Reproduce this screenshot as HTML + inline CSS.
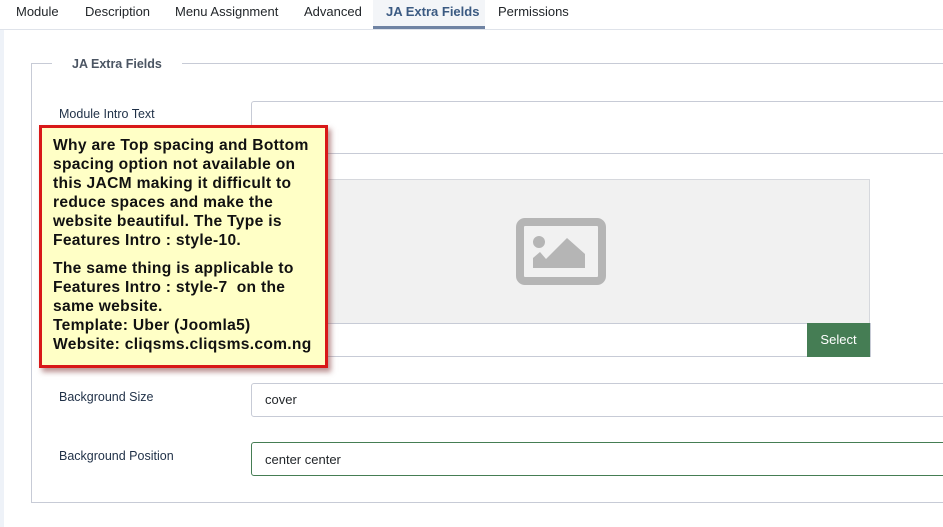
<!DOCTYPE html>
<html><head><style>
body{margin:0;width:943px;height:527px;overflow:hidden;background:#fff;font-family:"Liberation Sans",Arial,sans-serif;position:relative}
.a{position:absolute}
.tab{position:absolute;top:4px;font-size:13px;color:#22262a}
.lbl{position:absolute;font-size:12.5px;color:#1f3047}
.inp{position:absolute;border:1px solid #c7cbd6;border-radius:3px;background:#fff;box-sizing:border-box;font-size:13px;color:#22262a;padding-left:13px}
</style></head><body>
<div class="a" style="left:0;top:29px;width:4px;height:498px;background:#eef2f8"></div>
<div class="a" style="left:0;top:29px;width:943px;height:1px;background:#dfe3ea"></div>
<div class="tab" style="left:16px">Module</div>
<div class="tab" style="left:85px">Description</div>
<div class="tab" style="left:175px">Menu Assignment</div>
<div class="tab" style="left:304px">Advanced</div>
<div class="a" style="left:373px;top:0;width:112px;height:29px;background:#f3f5f8"></div>
<div class="tab" style="left:386px;color:#3b5a82;font-weight:bold">JA Extra Fields</div>
<div class="a" style="left:373px;top:26px;width:112px;height:3px;background:#6f83a3"></div>
<div class="tab" style="left:498px">Permissions</div>

<div class="a" style="left:31px;top:63px;width:930px;height:440px;border:1px solid #c7cbd6;box-sizing:border-box"></div>
<div class="a" style="left:52px;top:56px;padding:0 20px;background:#fff;font-size:12.5px;font-weight:bold;color:#4b5563;line-height:16px">JA Extra Fields</div>

<div class="lbl" style="left:59px;top:107px">Module Intro Text</div>
<div class="inp" style="left:251px;top:101px;width:720px;height:53px"></div>

<div class="a" style="left:251px;top:179px;width:619px;height:145px;background:#f1f1f1;border:1px solid #d6d8dd;box-sizing:border-box"></div>
<svg class="a" style="left:516px;top:218px" width="90" height="68" viewBox="0 0 90 68">
<rect x="4" y="4" width="82" height="59" rx="5" fill="none" stroke="#b5b5b5" stroke-width="8"/>
<circle cx="23" cy="24" r="6" fill="#b5b5b5"/>
<path d="M17 50 L17 40 L24 34 L30 41 L51 20 L69 36 L69 50 Z" fill="#b5b5b5"/>
</svg>
<div class="inp" style="left:251px;top:323px;width:620px;height:34px;border-radius:0"></div>
<div class="a" style="left:807px;top:323px;width:63px;height:34px;background:#457d54;color:#fff;font-size:13px;line-height:34px;text-align:center">Select</div>

<div class="lbl" style="left:59px;top:390px">Background Size</div>
<div class="inp" style="left:251px;top:383px;width:720px;height:34px;line-height:32px">cover</div>
<div class="lbl" style="left:59px;top:449px">Background Position</div>
<div class="inp" style="left:251px;top:442px;width:720px;height:34px;line-height:33px;border-color:#457d54">center center</div>

<div class="a" style="left:39px;top:125px;width:289px;height:243px;box-sizing:border-box;border:3px solid #d81818;background:#ffffc6;box-shadow:3px 4px 5px rgba(120,40,40,.5);padding:8px 6px 0 11px;font-size:15.6px;font-weight:bold;line-height:19px;color:#111;letter-spacing:0.3px">
<div>Why are Top spacing and Bottom spacing option not available on this JACM making it difficult to reduce spaces and make the website beautiful. The Type is Features Intro : style-10.</div>
<div style="margin-top:9px">The same thing is applicable to Features Intro : style-7&nbsp; on the same website.<br>Template: Uber (Joomla5)<br>Website: cliqsms.cliqsms.com.ng</div>
</div>
</body></html>
